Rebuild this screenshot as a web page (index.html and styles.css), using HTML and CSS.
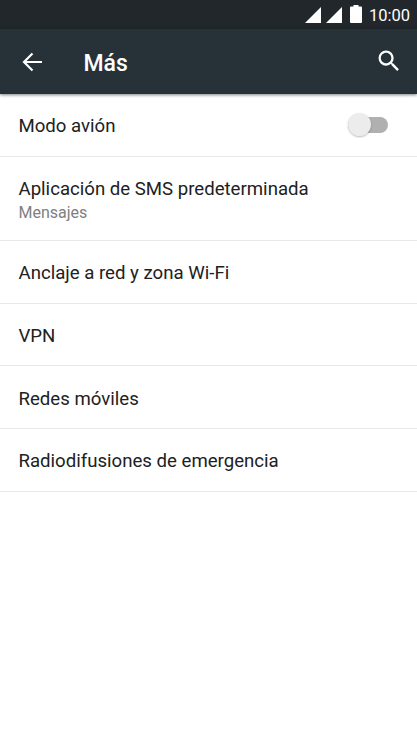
FILE: index.html
```
<!DOCTYPE html>
<html lang="es">
<head>
    <meta charset="UTF-8">
    <meta name="viewport" content="width=device-width, initial-scale=1.0">
    <title>Más</title>
    <link rel="stylesheet" href="styles.css">
</head>
<body>

<div class="statusbar">
    <svg class="signal" width="16" height="16" viewBox="0 0 16 16"><path d="M16 0v16H0z"/></svg>
    <svg class="signal" width="16" height="16" viewBox="0 0 16 16"><path d="M16 0v16H0z"/></svg>
    <svg class="battery" width="12" height="19" viewBox="0 0 12 19"><path d="M3.500 0h5v1.600H11q1 0 1 1V17q0 1-1 1H1q-1 0-1-1V2.600q0-1 1-1h2.500z"/></svg>
    <span class="clock">10:00</span>
</div>

<header class="toolbar">
    <svg class="back" width="20" height="20" viewBox="0 0 20 20"><path d="M10.500 1.500L2 10l8.500 8.500M2 10h18"/></svg>
    <h1>Más</h1>
    <svg class="search" width="28" height="28" viewBox="0 0 24 24"><path d="M15.5 14h-.79l-.28-.27A6.47 6.47 0 0 0 16 9.5 6.5 6.5 0 1 0 9.5 16c1.61 0 3.09-.59 4.23-1.57l.27.28v.79l5 4.99L20.49 19l-4.99-5zm-6 0C7.01 14 5 11.99 5 9.5S7.01 5 9.5 5 14 7.01 14 9.5 11.99 14 9.5 14z"/></svg>
</header>

<ul class="settings">
    <li class="item">
        <span class="title">Modo avión</span>
        <span class="switch"><span class="thumb"></span></span>
    </li>
    <li class="item item-double">
        <div>
            <div class="title">Aplicación de SMS predeterminada</div>
            <div class="summary">Mensajes</div>
        </div>
    </li>
    <li class="item"><span class="title">Anclaje a red y zona Wi-Fi</span></li>
    <li class="item"><span class="title">VPN</span></li>
    <li class="item"><span class="title">Redes móviles</span></li>
    <li class="item"><span class="title">Radiodifusiones de emergencia</span></li>
</ul>

</body>
</html>
```
FILE: styles.css
```
body {
    margin: 0;
    background-color: #fff;
    font-family: Roboto, sans-serif;
    color: #212121;
}

.statusbar {
    display: flex;
    align-items: center;
    justify-content: flex-end;
    box-sizing: border-box;
    height: 29px;
    padding-right: 7px;
    background-color: #21272b;
    color: #fff;
}
.statusbar svg,
.toolbar svg {
    display: block;
    fill: #fff;
}
.signal {
    margin-right: 5px;
}
.battery {
    margin: 0 7px 0 3px;
}
.clock {
    padding-top: 2px;
    font-size: 16.5px;
}

.toolbar {
    display: flex;
    align-items: center;
    box-sizing: border-box;
    height: 65px;
    padding: 0 14px 0 22px;
    background-color: #263238;
    color: #fff;
    box-shadow: 0 1px 3px rgba(0, 0, 0, 0.5);
}
.toolbar .back {
    fill: none;
    stroke: #fff;
    stroke-width: 2.2;
}
.toolbar h1 {
    flex: 1;
    margin: 0 0 0 41.5px;
    padding-top: 3px;
    font-size: 23px;
    font-weight: 500;
}
.search {
    margin-bottom: 1px;
}

.settings {
    margin: 0;
    padding: 0.3px 0 0;
    list-style: none;
}
.item {
    display: flex;
    align-items: center;
    justify-content: space-between;
    box-sizing: border-box;
    height: 62.7px;
    padding: 0 29px 0 18.5px;
    border-bottom: 1px solid #e8e8e8;
}
.item-double {
    height: 84px;
    padding-top: 1px;
}
.title {
    padding-top: 2.6px;
    font-size: 18.63px;
    line-height: 24px;
}
.summary {
    font-size: 16px;
    line-height: 23px;
    color: #808080;
}

.switch {
    display: flex;
    align-items: center;
    width: 40px;
    height: 16px;
    margin-bottom: 1px;
    border-radius: 8px;
    background: #b0b0b0;
}
.thumb {
    width: 23px;
    height: 23px;
    border-radius: 50%;
    background: #ececec;
    box-shadow: 0 1px 2px rgba(0, 0, 0, 0.25);
}
```
